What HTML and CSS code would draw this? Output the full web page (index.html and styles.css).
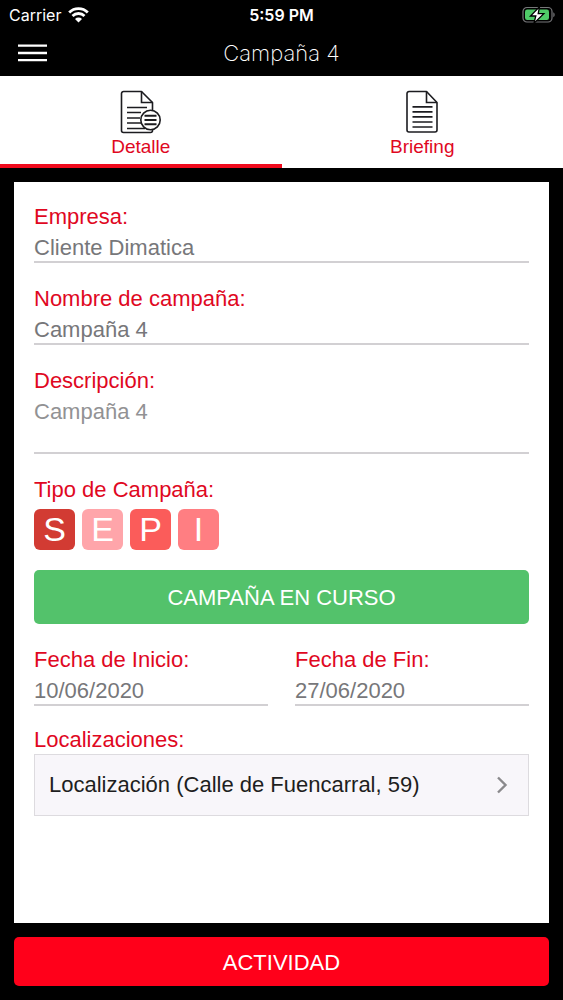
FILE: index.html
```html
<!DOCTYPE html>
<html lang="es">
<head>
<meta charset="utf-8">
<meta name="viewport" content="width=device-width, initial-scale=1">
<title>Campaña 4</title>
<link rel="stylesheet" href="styles.css">
</head>
<body>
<div class="status-bar">
  <div class="carrier">
    <span>Carrier</span>
    <svg width="21" height="16" viewBox="0 0 21 16" fill="none" stroke="#fff" stroke-width="2.8" aria-hidden="true">
      <path d="M1.2 5.5a13.2 13.2 0 0 1 18.6 0"/>
      <path d="M4.5 9a8.5 8.5 0 0 1 12 0"/>
      <path d="M10.5 15.4 7 11.9a5 5 0 0 1 7 0z" fill="#fff" stroke="none"/>
    </svg>
  </div>
  <time class="clock">5:59 PM</time>
  <svg class="battery" width="34" height="18" viewBox="0 0 34 18" aria-hidden="true">
    <rect x="1" y="1.500" width="29" height="14.500" rx="4" fill="none" stroke="#77777a" stroke-width="1.200"/>
    <rect x="3" y="3.500" width="24" height="10.500" rx="2.200" fill="#4fcb68"/>
    <path d="M31.300 6.300c1.800.8 1.800 4.200 0 5z" fill="#77777a"/>
    <path d="M17.500.8 8.500 10h5.300l-1.800 7.200 9.800-9.500h-5.600z" fill="#fff" stroke="#000" stroke-width="1.300"/>
  </svg>
</div>
<header class="nav-bar">
  <button class="menu-button" type="button" aria-label="Menú">
    <svg width="29" height="18" viewBox="0 0 29 18" stroke="#fff" stroke-width="2.300" aria-hidden="true"><path d="M0 1.700h29M0 9h29M0 16.200h29"/></svg>
  </button>
  <h1 class="title">Campaña 4</h1>
</header>
<nav class="tabs">
  <a class="tab tab-active" href="#detalle">
    <svg width="42" height="44" viewBox="0 0 42 44" fill="none" stroke="#1c1c20" stroke-width="1.600" aria-hidden="true">
      <path d="M32.500 20V12.500L21.500 1.500H3.500a2 2 0 0 0-2 2v37a2 2 0 0 0 2 2h27a2 2 0 0 0 2-2z" stroke-linejoin="round"/>
      <path d="M21.500 1.500v11h11M7 17.500h20M7 22.500h14M7 28h13M7 33h14M7 38.500h18"/>
      <circle cx="30.500" cy="30" r="9.700" fill="#fff"/>
      <path d="M24.500 25.800h12M24.500 30h12M24.500 34.200h12" stroke-width="2"/>
    </svg>
    <span>Detalle</span>
  </a>
  <a class="tab" href="#briefing">
    <svg width="34" height="44" viewBox="0 0 34 44" fill="none" stroke="#1c1c20" stroke-width="1.600" aria-hidden="true">
      <path d="M32 12.500 21.500 1.500H4a2 2 0 0 0-2 2v36.500a2 2 0 0 0 2 2h26a2 2 0 0 0 2-2z" stroke-linejoin="round"/>
      <path d="M21.500 1.500v11H32"/>
      <path d="M7.500 16.800h20M7.500 21.800h20M7.500 26.900h20M7.500 32h20M7.500 37h20" stroke-width="1.700"/>
    </svg>
    <span>Briefing</span>
  </a>
</nav>
<main class="content">
  <form class="card" id="detalle">
    <div class="field">
      <label for="empresa">Empresa:</label>
      <input id="empresa" type="text" value="Cliente Dimatica" readonly>
    </div>
    <div class="field">
      <label for="nombre">Nombre de campaña:</label>
      <input id="nombre" type="text" value="Campaña 4" readonly>
    </div>
    <div class="field">
      <label for="descripcion">Descripción:</label>
      <textarea id="descripcion" readonly>Campaña 4</textarea>
    </div>
    <div class="field">
      <span class="caption">Tipo de Campaña:</span>
      <div class="types">
        <span class="type type-s">S</span>
        <span class="type type-e">E</span>
        <span class="type type-p">P</span>
        <span class="type type-i">I</span>
      </div>
    </div>
    <button class="state-button" type="button">CAMPAÑA EN CURSO</button>
    <div class="dates">
      <div class="field">
        <label for="inicio">Fecha de Inicio:</label>
        <input id="inicio" type="text" value="10/06/2020" readonly>
      </div>
      <div class="field">
        <label for="fin">Fecha de Fin:</label>
        <input id="fin" type="text" value="27/06/2020" readonly>
      </div>
    </div>
    <div class="locations">
      <span class="caption caption-tight">Localizaciones:</span>
      <a class="location" href="#localizacion">
        <span>Localización (Calle de Fuencarral, 59)</span>
        <svg width="12" height="18" viewBox="0 0 12 18" fill="none" stroke="#8a898c" stroke-width="2.400" aria-hidden="true"><path d="m2 1.500 7.500 7.500L2 16.500"/></svg>
      </a>
    </div>
  </form>
  <button class="activity-button" type="button">ACTIVIDAD</button>
</main>
</body>
</html>
```
FILE: styles.css
```css
* {
  box-sizing: border-box;
}

body {
  margin: 0;
  min-height: 100vh;
  display: flex;
  flex-direction: column;
  background: #000;
  font-family: "Liberation Sans", Arial, sans-serif;
  font-size: 22px;
}

svg {
  display: block;
}

a {
  text-decoration: none;
}

button,
input,
textarea {
  margin: 0;
  border: 0;
  font: inherit;
}

.status-bar {
  display: grid;
  grid-template-columns: 1fr auto 1fr;
  align-items: center;
  height: 29px;
  padding: 0 7px;
  color: #fff;
  font-family: Inter, sans-serif;
  font-size: 16px;
}

.carrier {
  display: flex;
  align-items: center;
  gap: 7px;
  padding-left: 2px;
}

.clock {
  font-weight: 600;
}

.battery {
  justify-self: end;
}

.nav-bar {
  display: grid;
  grid-template-columns: 48px 1fr 48px;
  align-items: center;
  height: 47px;
}

.menu-button {
  padding: 0 0 0 18px;
  background: none;
}

.title {
  margin: 0;
  color: #fff;
  font-family: Inter, sans-serif;
  font-size: 22px;
  font-weight: 200;
  text-align: center;
}

.tabs {
  display: grid;
  grid-template-columns: 1fr 1fr;
  background: #fff;
}

.tab {
  display: flex;
  flex-direction: column;
  align-items: center;
  gap: 1px;
  padding: 14px 0 5px;
  border-bottom: 4px solid #fff;
  color: #e0081f;
  font-size: 19px;
  line-height: 24px;
}

.tab-active {
  border-bottom-color: #f00a1c;
}

.content {
  flex: 1;
  display: flex;
  flex-direction: column;
  gap: 14px;
  padding: 14px;
}

.card {
  flex: 1;
  display: flex;
  flex-direction: column;
  gap: 20px;
  padding: 19px 20px;
  background: #fff;
}

.field {
  display: flex;
  flex-direction: column;
  min-width: 0;
}

.field label,
.caption {
  display: block;
  color: #e0081f;
  line-height: 31px;
}

.field input,
.field textarea {
  width: 100%;
  height: 31px;
  padding: 3px 0 0;
  border-bottom: 2px solid #d2d0d3;
  border-radius: 0;
  background: none;
  color: #77777a;
  line-height: 26px;
  outline: none;
}

.field textarea {
  display: block;
  height: 58px;
  color: #929294;
  resize: none;
}

.types {
  display: flex;
  gap: 7px;
  padding-top: 4px;
}

.type {
  width: 41px;
  border-radius: 6px;
  color: #fff;
  font-size: 34px;
  line-height: 41px;
  text-align: center;
}

.type-s {
  background: #d23b33;
}

.type-e {
  background: #ffa5aa;
}

.type-p {
  background: #fb5c5a;
}

.type-i {
  background: #ff7e82;
}

.state-button {
  height: 54px;
  padding: 2px 0 0;
  border-radius: 5px;
  background: #53c26b;
  color: #fff;
}

.dates {
  display: grid;
  grid-template-columns: 1fr 1fr;
  gap: 27px;
}

.caption-tight {
  line-height: 28px;
}

.location {
  display: flex;
  align-items: center;
  justify-content: space-between;
  height: 62px;
  padding: 0 20px 0 14px;
  border: 1px solid #dddbdf;
  background: #f8f6fa;
  color: #1e1e21;
}

.activity-button {
  height: 49px;
  padding: 2px 0 0;
  border-radius: 5px;
  background: #ff001a;
  color: #fff;
}
```
